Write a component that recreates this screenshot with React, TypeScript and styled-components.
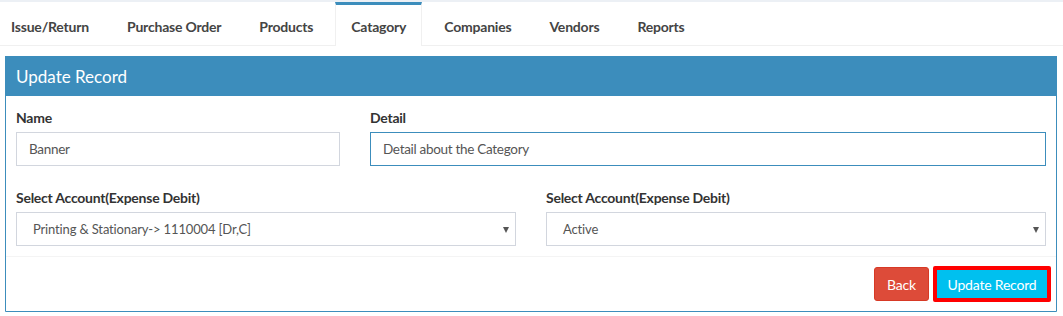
import styled, { createGlobalStyle } from 'styled-components';

const GlobalStyle = createGlobalStyle`
  html, body {
    margin: 0;
    padding: 0;
    background: #ffffff;
    font-family: Lato, 'Liberation Sans', sans-serif;
    font-size: 14px;
    color: #333;
  }
  * { box-sizing: border-box; }
`;

const tabs = ['Issue/Return', 'Purchase Order', 'Products', 'Catagory', 'Companies', 'Vendors', 'Reports'];

const Page = styled.div`
  width: 1063px;
  height: 316px;
  border-top: 2px solid #ecf0f5;
  overflow: hidden;
`;

const TabBar = styled.ul`
  display: flex;
  margin: 0;
  padding: 0;
  list-style: none;
  height: 44px;
  border-bottom: 1px solid #f0f0f0;
`;

const Tab = styled.li<{ active?: boolean }>`
  display: flex;
  align-items: center;
  padding: 2px 15px 0;
  font-weight: 700;
  font-size: 14px;
  letter-spacing: -0.2px;
  color: #444;
  height: ${(p) => (p.active ? '44px' : '43px')};
  border-top: 3px solid ${(p) => (p.active ? '#3c8dbc' : 'transparent')};
  border-left: 1px solid ${(p) => (p.active ? '#f0f0f0' : 'transparent')};
  border-right: 1px solid ${(p) => (p.active ? '#f0f0f0' : 'transparent')};
  background: #fff;
  &:first-child { padding-left: 10px; }
  & + & { margin-left: 6px; }
`;

const Box = styled.div`
  margin: 10px 6px 0 5px;
  border: 1px solid #3c8dbc;
  border-radius: 3px 3px 0 0;
  background: #fff;
  height: 256px;
`;

const BoxHeader = styled.div`
  background: #3c8dbc;
  color: #fff;
  height: 40px;
  display: flex;
  align-items: center;
  font-size: 17px;
  margin: -1px -1px 0 -1px;
  padding: 0 0 0 11px;
`;

const BoxBody = styled.div`
  padding: 12px 10px 10px;
  border-bottom: 1px solid #f4f4f4;
`;

const Row = styled.div<{ cols: string }>`
  display: grid;
  grid-template-columns: ${(p) => p.cols};
  column-gap: 30px;
  & + & { margin-top: 22px; }
`;

const Field = styled.div`
  display: flex;
  flex-direction: column;
`;

const Label = styled.label`
  font-weight: 700;
  font-size: 14px;
  letter-spacing: -0.25px;
  color: #333;
  line-height: 20px;
  margin-bottom: 4px;
`;

const Input = styled.div<{ focused?: boolean }>`
  height: 34px;
  border: 1px solid ${(p) => (p.focused ? '#3c8dbc' : '#d2d6de')};
  padding: 0 12px;
  display: flex;
  align-items: center;
  color: #555;
  font-size: 13.5px;
  letter-spacing: -0.3px;
`;

const Select = styled.div`
  height: 34px;
  border: 1px solid #d2d6de;
  padding: 0 6px 0 16px;
  display: flex;
  align-items: center;
  justify-content: space-between;
  color: #555;
  font-size: 13px;
  letter-spacing: -0.15px;
`;

const Caret = styled.span`
  width: 0;
  height: 0;
  border-left: 3px solid transparent;
  border-right: 3px solid transparent;
  border-top: 6px solid #555;
  margin-top: 2px;
`;

const Footer = styled.div`
  display: flex;
  justify-content: flex-end;
  align-items: center;
  gap: 4px;
  padding: 9px 5px 0 0;
`;

const Button = styled.button<{ variant: 'danger' | 'info' }>`
  font-family: inherit;
  font-size: 14px;
  letter-spacing: -0.2px;
  color: #fff;
  height: 34px;
  padding: 0 12px;
  border-radius: 3px;
  cursor: pointer;
  background: ${(p) => (p.variant === 'danger' ? '#dd4b39' : '#00c0ef')};
  border: 1px solid ${(p) => (p.variant === 'danger' ? '#d73925' : '#00acd6')};
`;

const Highlight = styled.div`
  border: 4px solid #ff0000;
  border-radius: 2px;
  display: flex;
  & > button {
    height: 28px;
    border: none;
    border-radius: 0;
    width: 110px;
    padding: 0;
  }
`;

export default function App() {
  return (
    <Page>
      <GlobalStyle />
      <TabBar>
        {tabs.map((t) => (
          <Tab key={t} active={t === 'Catagory'}>
            {t}
          </Tab>
        ))}
      </TabBar>
      <Box>
        <BoxHeader>Update Record</BoxHeader>
        <BoxBody>
          <Row cols="324px 1fr">
            <Field>
              <Label>Name</Label>
              <Input>Banner</Input>
            </Field>
            <Field>
              <Label>Detail</Label>
              <Input focused>Detail about the Category</Input>
            </Field>
          </Row>
          <Row cols="1fr 1fr">
            <Field>
              <Label>Select Account(Expense Debit)</Label>
              <Select>
                <span>Printing &amp; Stationary-&gt; 1110004 [Dr,C]</span>
                <Caret />
              </Select>
            </Field>
            <Field>
              <Label>Select Account(Expense Debit)</Label>
              <Select>
                <span>Active</span>
                <Caret />
              </Select>
            </Field>
          </Row>
        </BoxBody>
        <Footer>
          <Button variant="danger">Back</Button>
          <Highlight>
            <Button variant="info">Update Record</Button>
          </Highlight>
        </Footer>
      </Box>
    </Page>
  );
}
